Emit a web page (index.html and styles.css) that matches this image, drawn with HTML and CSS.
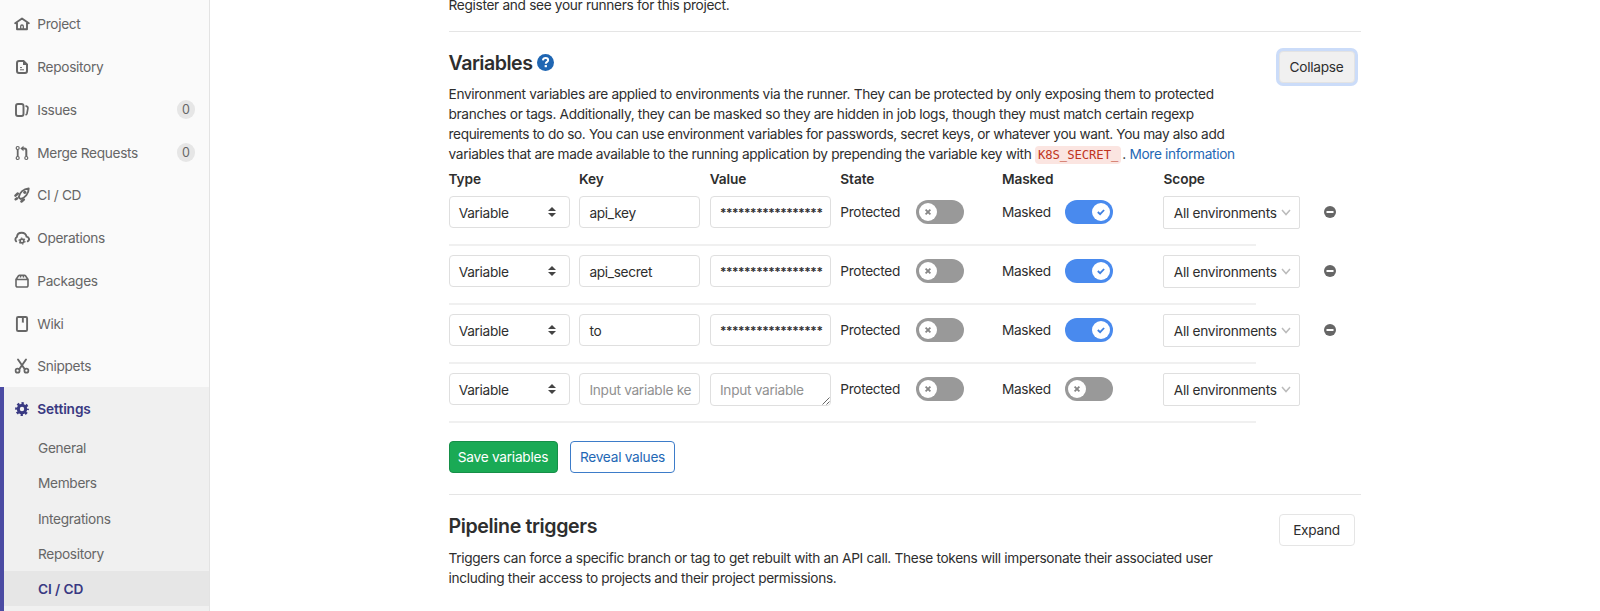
FILE: index.html
```html
<!DOCTYPE html>
<html lang="en">
<head>
<meta charset="utf-8">
<title>CI / CD Settings</title>
<link rel="stylesheet" href="styles.css">
</head>
<body>
<svg class="defs" width="0" height="0">
  <symbol id="home" viewBox="0 0 16 16"><path d="M1.200 7.200 8 2.500l6.800 4.700M3 7v6.300h10V7" fill="none" stroke="currentColor" stroke-width="1.900" stroke-linecap="round" stroke-linejoin="round"/><path d="M6.700 13V10.300a1.300 1.300 0 0 1 2.600 0V13" fill="none" stroke="currentColor" stroke-width="1.300"/></symbol>
  <symbol id="doc" viewBox="0 0 16 16"><path d="M5 2h4.500L13 5.500V12a2 2 0 0 1-2 2H5a2 2 0 0 1-2-2V4a2 2 0 0 1 2-2z" fill="none" stroke="currentColor" stroke-width="2"/><path d="M9 2v4h4.500L9.800 1.500z" fill="currentColor"/><path d="M6 8.600h2M6 10.800h4" stroke="currentColor"/></symbol>
  <symbol id="issues" viewBox="0 0 16 16"><rect x="2" y="2" width="7.500" height="12" rx="2" fill="none" stroke="currentColor" stroke-width="1.900"/><path d="M11.500 3.900c1.600.3 2.600.8 2.400 2.400L13 11.500c-.2.700-.6 1.200-1.500 1.500" fill="none" stroke="currentColor" stroke-width="1.700"/></symbol>
  <symbol id="merge" viewBox="0 0 16 16"><g fill="none" stroke="currentColor" stroke-width="1.200"><circle cx="3.700" cy="3" r="1.500"/><circle cx="3.700" cy="13" r="1.500"/><circle cx="12.300" cy="13" r="1.500"/><path d="M3.700 4.500v7" stroke-width="1.800"/><path d="M8 3.500h2.300a2 2 0 0 1 2 2v6" stroke-width="2"/></g><path d="M9.500.8v5.400L6.300 3.500z" fill="currentColor"/></symbol>
  <symbol id="rocket" viewBox="0 0 16 16"><path d="M5.600 11.300 4.800 10C5.700 5.500 9.500 2 14.700 1.500 14.700 6.700 11 10.800 6.800 12z" fill="none" stroke="currentColor" stroke-width="1.900" stroke-linejoin="round"/><circle cx="10.800" cy="5.300" r="1.600" fill="currentColor"/><path d="M3.800 6.500 1.500 8.700M9.800 12.500l-2.300 2M3 11.400l-1.300.900" stroke="currentColor" stroke-width="2.500" stroke-linecap="round"/></symbol>
  <symbol id="cloud" viewBox="0 0 16 16"><path d="M2.200 11.300A2.700 2.700 0 0 1 2.900 7C3.100 4.200 5 2.700 7.700 2.700c2.800 0 4.400 1.800 4.900 4 2.700.8 3.300 3.300 1.200 4.600" fill="none" stroke="currentColor" stroke-width="1.900" stroke-linecap="round"/><circle cx="8" cy="11" r="1.900" fill="none" stroke="currentColor" stroke-width="1.600"/><circle cx="8" cy="11" r="3" fill="none" stroke="currentColor" stroke-width="1.100" stroke-dasharray="1.500 1.642"/></symbol>
  <symbol id="package" viewBox="0 0 16 16"><path d="M2 6.500h12V12.500a1.500 1.500 0 0 1-1.500 1.500h-9A1.500 1.500 0 0 1 2 12.500zL4.500 2.700a1.500 1.500 0 0 1 1-.5h5a1.500 1.500 0 0 1 1 .5L14 6.500M6.900 2.500 6.300 4.500M9.100 2.500 9.700 4.500" fill="none" stroke="currentColor" stroke-width="1.600"/></symbol>
  <symbol id="book" viewBox="0 0 16 16"><rect x="2.900" y="1" width="10.200" height="14" rx="1.300" fill="none" stroke="currentColor" stroke-width="1.900"/><path d="M7.900 1h1.900v6L8.850 6.300 7.900 7z" fill="currentColor"/></symbol>
  <symbol id="scissors" viewBox="0 0 16 16"><g fill="none" stroke="currentColor"><path d="m4 1.500 6.800 9.800M12 1.500 5.200 11.300" stroke-width="1.900" stroke-linecap="round"/><circle cx="3.600" cy="12.700" r="2" stroke-width="1.700"/><circle cx="12.400" cy="12.700" r="2" stroke-width="1.700"/></g></symbol>
  <symbol id="gear" viewBox="0 0 16 16"><circle cx="8" cy="8" r="3.700" fill="none" stroke="currentColor" stroke-width="3"/><circle cx="8" cy="8" r="5.700" fill="none" stroke="currentColor" stroke-width="2.400" stroke-dasharray="2.300 2.177" stroke-dashoffset="1.150"/></symbol>
  <symbol id="sort" viewBox="0 0 8 10"><path d="M4 0 8 4H0zM0 6h8L4 10z" fill="currentColor"/></symbol>
  <symbol id="chevron" viewBox="0 0 10 7"><path d="m1 1 4 4.500L9 1" fill="none" stroke="currentColor" stroke-width="1.500"/></symbol>
  <symbol id="off" viewBox="0 0 18 18"><circle cx="9" cy="9" r="9" fill="#fff"/><path d="m6.600 6.600 4.800 4.800m0-4.800-4.800 4.800" stroke="#868686" stroke-width="1.800"/></symbol>
  <symbol id="on" viewBox="0 0 18 18"><circle cx="9" cy="9" r="9" fill="#fff"/><path d="m5.800 9 2.300 2.200 4-4.200" fill="none" stroke="#3e7fe0" stroke-width="1.800"/></symbol>
  <symbol id="minus" viewBox="0 0 12 12"><circle cx="6" cy="6" r="6" fill="#666"/><path d="M2.500 6h7" stroke="#fff" stroke-width="2"/></symbol>
</svg>
<div class="page">
  <nav class="sidebar">
    <a class="item"><svg><use href="#home"/></svg>Project</a>
    <a class="item"><svg><use href="#doc"/></svg>Repository</a>
    <a class="item"><svg><use href="#issues"/></svg>Issues<span class="badge">0</span></a>
    <a class="item"><svg><use href="#merge"/></svg>Merge Requests<span class="badge">0</span></a>
    <a class="item"><svg><use href="#rocket"/></svg>CI / CD</a>
    <a class="item"><svg><use href="#cloud"/></svg>Operations</a>
    <a class="item"><svg><use href="#package"/></svg>Packages</a>
    <a class="item"><svg><use href="#book"/></svg>Wiki</a>
    <a class="item"><svg><use href="#scissors"/></svg>Snippets</a>
    <div class="group">
      <a class="item current"><svg><use href="#gear"/></svg>Settings</a>
      <a class="sub">General</a>
      <a class="sub">Members</a>
      <a class="sub">Integrations</a>
      <a class="sub">Repository</a>
      <a class="sub active">CI / CD</a>
    </div>
  </nav>
  <main class="content">
    <p class="text intro">Register and see your runners for this project.</p>
    <section class="section variables">
      <header class="head"><h4>Variables</h4><svg class="help" viewBox="0 0 18 18"><circle cx="9" cy="9" r="9" fill="#1f66b3"/><path d="M6.200 6.700C6.500 5 7.600 4.300 9.100 4.300c1.600 0 2.700.9 2.700 2.200 0 1.800-2.500 1.900-2.500 3.800" fill="none" stroke="#fff" stroke-width="2.100"/><path d="M8.100 11.700h2.400v2.300H8.100z" fill="#fff"/></svg><button class="btn focused">Collapse</button></header>
      <p class="text">Environment variables are applied to environments via the runner. They can be protected by only exposing them to protected<br>branches or tags. Additionally, they can be masked so they are hidden in job logs, though they must match certain regexp<br><span class="tight">requirements to do so. You can use environment variables for passwords, secret keys, or whatever you want. You may also add</span><br>variables that are made available to the running application by prepending the variable key with <code>K8S_SECRET_</code>. <a class="link">More information</a></p>
      <div class="grid labels"><b>Type</b><b>Key</b><b>Value</b><b>State</b><b>Masked</b><b>Scope</b></div>
      <div class="row"><div class="grid">
        <div class="field">Variable<svg class="sort"><use href="#sort"/></svg></div><div class="field">api_key</div><div class="field stars">*****************</div>
        <div class="state">Protected<span class="toggle"><svg><use href="#off"/></svg></span></div><div class="state masked">Masked<span class="toggle checked"><svg><use href="#on"/></svg></span></div>
        <div class="field scope">All environments<svg class="chev"><use href="#chevron"/></svg></div><svg class="minus"><use href="#minus"/></svg></div></div>
      <div class="row"><div class="grid">
        <div class="field">Variable<svg class="sort"><use href="#sort"/></svg></div><div class="field">api_secret</div><div class="field stars">*****************</div>
        <div class="state">Protected<span class="toggle"><svg><use href="#off"/></svg></span></div><div class="state masked">Masked<span class="toggle checked"><svg><use href="#on"/></svg></span></div>
        <div class="field scope">All environments<svg class="chev"><use href="#chevron"/></svg></div><svg class="minus"><use href="#minus"/></svg></div></div>
      <div class="row"><div class="grid">
        <div class="field">Variable<svg class="sort"><use href="#sort"/></svg></div><div class="field">to</div><div class="field stars">*****************</div>
        <div class="state">Protected<span class="toggle"><svg><use href="#off"/></svg></span></div><div class="state masked">Masked<span class="toggle checked"><svg><use href="#on"/></svg></span></div>
        <div class="field scope">All environments<svg class="chev"><use href="#chevron"/></svg></div><svg class="minus"><use href="#minus"/></svg></div></div>
      <div class="row"><div class="grid">
        <div class="field">Variable<svg class="sort"><use href="#sort"/></svg></div><div class="field hint key">Input variable ke</div><div class="field hint area">Input variable<svg class="grip" viewBox="0 0 8 8"><path d="M.5 7.500l7-7M4.500 7.500l3-3" stroke="#555" stroke-width=".9"/></svg></div>
        <div class="state">Protected<span class="toggle"><svg><use href="#off"/></svg></span></div><div class="state masked">Masked<span class="toggle"><svg><use href="#off"/></svg></span></div>
        <div class="field scope">All environments<svg class="chev"><use href="#chevron"/></svg></div></div></div>
      <div class="actions"><button class="btn save">Save variables</button><button class="btn reveal">Reveal values</button></div>
    </section>
    <section class="section">
      <header class="head last"><h4 class="wide">Pipeline triggers</h4><button class="btn expand">Expand</button></header>
      <p class="text">Triggers can force a specific branch or tag to get rebuilt with an API call. These tokens will impersonate their associated user<br>including their access to projects and their project permissions.</p>
    </section>
  </main>
</div>
</body>
</html>
```
FILE: styles.css
```css
* { box-sizing: border-box; }
body { margin: 0; background: #fff; color: #2e2e2e; font: 13.700px/20px Inter, "Liberation Sans", sans-serif; letter-spacing: -.335px; }
.defs { display: block; height: 0; }
.page { display: flex; height: 611px; overflow: hidden; }
.sidebar { width: 210px; flex: none; padding-top: 2.600px; background: #fafafa; border-right: 1px solid #e3e3e3; color: #666; }
.item { display: flex; align-items: center; height: 42.760px; padding: 1px 14px 0 14px; }
.item svg { width: 16px; height: 16px; margin-right: 7.300px; color: #666; }
.badge { margin-left: auto; width: 18px; height: 19px; border-radius: 9px; background: #e6e6e6; text-align: center; font-size: 12.500px; line-height: 19px; letter-spacing: 0; }
.group { background: #f0f0f0; box-shadow: inset 4px 0 #4b4ba3; height: 230px; }
.current, .active { color: #393982; font-weight: 600; letter-spacing: -.1px; }
.item.current svg { color: #393982; }
.sub { display: flex; align-items: center; height: 35.200px; margin-left: 4px; padding: 1px 0 0 34px; }
.sub.active { background: #e6e6e6; }
.content { width: 912px; margin-left: 238.500px; }
.text { margin: 0; white-space: nowrap; }
.tight { letter-spacing: -.380px; }
.intro { height: 36px; margin-top: -5px; letter-spacing: -.325px; }
.section { border-top: 1px solid #e5e5e5; }
.head { display: flex; height: 52px; padding: 20px 6px 0 0; }
.head.last { height: 52.500px; }
h4 { margin: 0; font-size: 19.600px; line-height: 22px; font-weight: 600; letter-spacing: -.500px; }
.wide { letter-spacing: -.380px; }
.help { width: 17px; height: 17px; margin: 2px 0 0 5px; }
.btn { height: 32px; border: 1px solid #e5e5e5; border-radius: 4px; background: #fff; color: #2e2e2e; font: inherit; letter-spacing: -.270px; padding: 0; text-align: center; white-space: nowrap; }
.head .btn { width: 76px; margin: -1px 0 0 auto; }
.focused.btn { background: #f0f0f0; border-color: #e3e3e3; box-shadow: 0 0 0 3px #cbdcf9; }
code { padding: 2px 3px; margin-right: 1px; border-radius: 4px; background: #fbe5e1; color: #c0341d; font: 12.300px/14px "DejaVu Sans Mono", monospace; letter-spacing: -.1px; }
.link { color: #1f68b5; }
.grid { display: grid; grid-template-columns: 121px 121px 121px 152px 152px 137px 12px; column-gap: 9.600px; align-items: center; width: 882px; }
.labels { height: 16px; margin: 5px 0 2px; letter-spacing: -.1px; }
.labels b { font-weight: 600; white-space: nowrap; }
.row { width: 807px; height: 59px; padding-top: 8.500px; border-bottom: 2px solid #f0f0f0; }
.field { display: flex; align-items: center; height: 32px; border: 1px solid #dfdfdf; border-radius: 4px; padding: 2px 9.300px 0; white-space: nowrap; position: relative; }
.sort { width: 8px; height: 10px; margin: -2px 3px 0 auto; color: #444; }
.stars { font-size: 12px; font-weight: 600; letter-spacing: -.450px; }
.hint { color: #919191; letter-spacing: -.30px; }
.area, .scope { height: 33px; margin-bottom: -1px; padding-top: 1px; }
.grip { position: absolute; right: 0; bottom: 0; width: 8px; height: 8px; }
.state { display: flex; align-items: center; padding-top: 1px; }
.toggle { display: flex; align-items: center; width: 48px; height: 24px; margin-left: auto; margin-right: 28.500px; padding: 3px; border-radius: 12px; background: #999; }
.masked .toggle { margin-right: 41px; }
.toggle svg { width: 18px; height: 18px; }
.toggle.checked { background: #498aee; justify-content: flex-end; }
.scope { border-radius: 2px; letter-spacing: -.3px; }
.chev { flex: none; width: 10px; height: 7px; margin-left: auto; margin-right: -1px; color: #bbb; }
.minus { width: 12px; height: 12px; margin-left: 14px; }
.actions { display: flex; gap: 12.500px; height: 71px; padding-top: 18px; }
.btn.save { width: 109px; background: #1aaa55; border-color: #168f48; color: #fff; }
.btn.reveal { width: 105px; border-color: #3d7cc9; color: #1f68b5; }
```
